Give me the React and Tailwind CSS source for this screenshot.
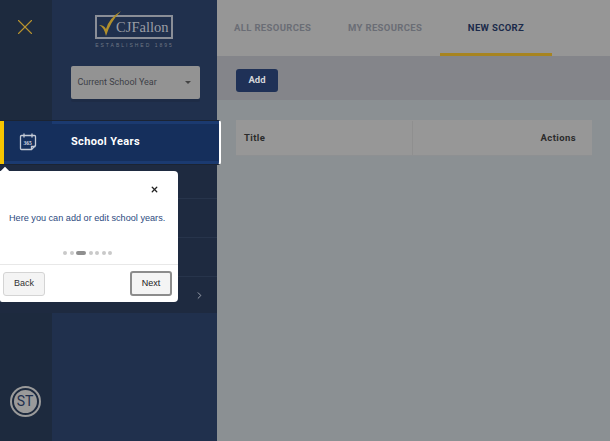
import React from 'react';
import { X, ChevronRight } from 'lucide-react';

const roboto = "font-['Roboto',sans-serif]";
const arial = "font-['Liberation_Sans',Arial,sans-serif]";

function Logo() {
    return (
        <div className="flex flex-col items-center">
            <div className="relative flex h-[24px] w-[78px] items-center justify-end border-2 border-[#8a8e97] pr-[3px]">
                <span className="font-['Liberation_Serif',serif] text-[14.5px] leading-none text-[#9b9ea5]">CJFallon</span>
                <svg className="absolute left-[1px] -top-[7px]" width="24" height="28" viewBox="0 0 24 28">
                    <path d="M1 15 Q6 17 8 26 Q12 12 23 1 Q11 8 8 19 Q6 15 1 15Z" fill="#b08f2c" />
                </svg>
            </div>
            <div className={`${arial} mt-[3px] text-[5px] leading-[6px] tracking-[2px] text-[#6f7684]`}>ESTABLISHED 1895</div>
        </div>
    );
}

function CalendarIcon() {
    return (
        <svg width="18" height="18" viewBox="0 0 18 18" fill="none" stroke="#c4cad6" strokeWidth="1.3">
            <path d="M2.5 2.5H15.5Q16.5 2.5 16.5 3.5V12.5L12.5 16.5H2.5Q1.5 16.5 1.5 15.5V3.5Q1.5 2.5 2.5 2.5Z" />
            <path d="M5 1V4M13 1V4" strokeLinecap="round" />
            <path d="M12.5 16.5V13.5H16.5" />
            <text x="8.5" y="11.5" textAnchor="middle" fontSize="5.5" fontWeight="700" fill="#d4d9e2" stroke="none" fontFamily="Liberation Serif, serif">365</text>
        </svg>
    );
}

function Dots() {
    return (
        <div className="flex items-center gap-[2.5px] pl-[63px]">
            <span className="size-[4px] rounded-full bg-[#c9c9c9]" />
            <span className="size-[4px] rounded-full bg-[#c9c9c9]" />
            <span className="h-[4px] w-[10px] rounded-full bg-[#8f8f8f]" />
            <span className="size-[4px] rounded-full bg-[#c9c9c9]" />
            <span className="size-[4px] rounded-full bg-[#c9c9c9]" />
            <span className="size-[4px] rounded-full bg-[#c9c9c9]" />
            <span className="size-[4px] rounded-full bg-[#c9c9c9]" />
        </div>
    );
}

function Tour() {
    return (
        <div className={`${arial} absolute left-0 top-[171px] z-20 flex h-[131px] w-[178px] flex-col rounded-r-[4px] rounded-bl-[2px] bg-white`}>
            <div className="absolute -top-[3px] left-[2px] size-[6px] rotate-45 bg-white" />
            <div className="flex h-[32px] justify-end pr-[19px] pt-[14px]">
                <X size={9} strokeWidth={3.5} className="text-[#222]" />
            </div>
            <p className="mt-[9px] pl-[9px] text-[9.15px] leading-[13px] whitespace-nowrap text-[#2c4a7e]">Here you can add or edit school years.</p>
            <div className="mt-[26px]"><Dots /></div>
            <div className="mt-[9px] h-[1px] bg-[#e8e8e8]" />
            <div className="flex items-center justify-between pl-[3px] pr-[6px] pt-[6px]">
                <button className="h-[24px] w-[42px] rounded-[3px] border border-[#d4d4d4] bg-[#f4f4f4] text-[9px] text-[#333]">Back</button>
                <button className="h-[25px] w-[42px] rounded-[3px] border-2 border-[#8c8c8c] bg-[#f4f4f4] text-[9px] text-[#222]">Next</button>
            </div>
        </div>
    );
}

function Sidebar() {
    return (
        <aside className="relative flex h-full w-[217px] shrink-0 flex-col bg-[#1e2a40]">
            {/* top block */}
            <div className="flex h-[120px]">
                <div className="flex w-[52px] justify-center bg-[#1d2a3e] pr-[3px] pt-[14px]">
                    <X size={26} strokeWidth={1} className="text-[#b8942e]" />
                </div>
                <div className="flex flex-1 flex-col items-center bg-[#20304d] pt-[15px]">
                    <Logo />
                    <div className={`${roboto} mt-[18px] ml-[1px] flex h-[33px] w-[129px] items-center justify-between rounded-[2px] bg-[#939393] pl-[7px] pr-[9px] text-[9px] text-[#3d4047] shadow-[0_3px_0_#1e2c46]`}>
                        <span>Current School Year</span>
                        <span className="border-x-[3.5px] border-t-[3.5px] border-x-transparent border-t-[#444]" />
                    </div>
                </div>
            </div>

            {/* active row */}
            <div className="relative z-10 flex h-[45px] w-[221px] items-center rounded-r-[3px] border-y border-r-2 border-y-[#1b2433] border-r-white bg-[#152f5c] shadow-[inset_0_-3px_0_#1b3a70]">
                <div className="absolute inset-y-0 left-0 w-[4px] bg-[#f5c400]" />
                <div className="absolute left-[52px] right-0 top-0 h-[3px] bg-[#1b3a70]" />
                <div className="flex w-[56px] justify-center pb-[2px]"><CalendarIcon /></div>
                <span className={`${roboto} ml-[15px] text-[11px] font-bold tracking-[0.35px] text-white`}>School Years</span>
            </div>

            {/* rows behind the tour */}
            <div className="h-[34px] border-b border-[#27344b]" />
            <div className="h-[39px] border-b border-[#27344b]" />
            <div className="h-[39px] border-b border-[#27344b]" />
            <div className="flex h-[36px] items-center justify-end pr-[12px]">
                <ChevronRight size={11} strokeWidth={2} className="text-[#a5abb6]" />
            </div>

            {/* bottom block */}
            <div className="flex flex-1">
                <div className="flex w-[52px] items-end justify-center bg-[#1d2a3e] pb-[26px] pr-[2px]">
                    <div className={`${roboto} flex size-[27px] items-center justify-center rounded-full border-2 border-[#1d2a3e] bg-[#9a9a9a] text-[14px] text-[#1f2f4d] outline-2 outline-[#9a9a9a]`}>ST</div>
                </div>
                <div className="flex-1 bg-[#20304d]" />
            </div>

            <Tour />
        </aside>
    );
}

function Main() {
    return (
        <main className={`${roboto} flex h-full flex-1 flex-col bg-[#8b9093]`}>
            <div className="flex h-[56px] bg-[#969696] text-[9.5px] font-bold tracking-[0.35px]">
                <div className="flex w-[114px] items-center pl-[17px] pt-[1px] text-[#6a6d75]">ALL RESOURCES</div>
                <div className="flex w-[109px] items-center pl-[17px] pt-[1px] text-[#6a6d75]">MY RESOURCES</div>
                <div className="flex w-[112px] items-center justify-center border-b-[3px] border-[#a78420] pt-[3px] text-[#1b2a4a]">NEW SCORZ</div>
            </div>
            <div className="flex h-[44px] items-center bg-[#84858a] pl-[19px] pt-[4px]">
                <button className="h-[23px] w-[42px] rounded-[3px] bg-[#1f3157] text-[9.5px] font-bold text-[#d4d6da]">Add</button>
            </div>
            <div className="pl-[19px] pr-[18px] pt-[20px]">
                <div className="flex h-[35px] items-center bg-[#979797] pt-[1px] text-[9.5px] font-bold tracking-[0.4px] text-[#2b2b2b] shadow-[0_1px_0_#8e9092]">
                    <div className="flex h-full w-[177px] items-center border-r border-[#8f8f8f] pl-[8px]">Title</div>
                    <div className="flex-1 pr-[16px] text-right">Actions</div>
                </div>
            </div>
        </main>
    );
}

export default function App() {
    return (
        <div className="flex h-[441px] w-[610px] overflow-hidden">
            <Sidebar />
            <Main />
        </div>
    );
}
